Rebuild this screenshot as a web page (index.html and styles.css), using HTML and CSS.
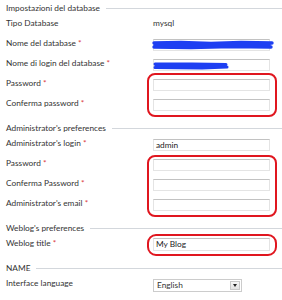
FILE: index.html
```html
<!DOCTYPE html>
<html>
<head>
<meta charset="utf-8">
<link rel="stylesheet" href="styles.css">
</head>
<body>
<div class="page">
  <section class="group">
    <div class="legend"><span>Impostazioni del database</span></div>
    <div class="row"><div class="label">Tipo Database</div><div class="field"><span class="value">mysql</span></div></div>
    <div class="row"><div class="label">Nome del database <span class="req">*</span></div><div class="field"><div class="input"></div>
      <svg class="scribble s1" width="124" height="12" viewBox="0 0 124 12"><path d="M3 4 L30 3.5 L60 4.5 L90 3.5 L121 4 M3 8 L40 8.5 L80 7.5 L120 8 M4 6 L118 6" stroke="#1e3ff2" stroke-width="3.4" stroke-linecap="round" fill="none"/></svg></div></div>
    <div class="row"><div class="label">Nome di login del database <span class="req">*</span></div><div class="field"><div class="input"></div>
      <svg class="scribble s2" width="80" height="10" viewBox="0 0 80 10"><path d="M3 3 L40 3 L74 3.5 M3 6.5 L50 7 L75 6 M4 4.8 L72 5" stroke="#1e3ff2" stroke-width="3" stroke-linecap="round" fill="none"/></svg></div></div>
    <div class="mark mark-a">
      <div class="row"><div class="label">Password <span class="req">*</span></div><div class="field"><div class="input"></div></div></div>
      <div class="row"><div class="label">Conferma password <span class="req">*</span></div><div class="field"><div class="input"></div></div></div>
    </div>
  </section>

  <section class="group">
    <div class="legend"><span>Administrator's preferences</span></div>
    <div class="row"><div class="label">Administrator's login <span class="req">*</span></div><div class="field"><div class="input">admin</div></div></div>
    <div class="mark mark-b">
      <div class="row"><div class="label">Password <span class="req">*</span></div><div class="field"><div class="input"></div></div></div>
      <div class="row"><div class="label">Conferma Password <span class="req">*</span></div><div class="field"><div class="input"></div></div></div>
      <div class="row"><div class="label">Administrator's email <span class="req">*</span></div><div class="field"><div class="input"></div></div></div>
    </div>
  </section>

  <section class="group">
    <div class="legend"><span>Weblog's preferences</span></div>
    <div class="mark mark-c">
      <div class="row"><div class="label">Weblog title <span class="req">*</span></div><div class="field"><div class="input tall">My Blog</div></div></div>
    </div>
  </section>

  <section class="group">
    <div class="legend"><span>NAME</span></div>
    <div class="row"><div class="label">Interface language</div><div class="field"><div class="select"><span class="sel-text">English</span><span class="sel-btn"><span class="tri"></span></span></div></div></div>
  </section>
</div>
</body>
</html>
```

FILE: styles.css
```css
html, body {
  margin: 0;
  padding: 0;
  background: #ffffff;
}
body {
  font-family: Lato, "Liberation Sans", sans-serif;
  font-size: 8.3px;
  color: #333333;
}
.page {
  width: 276px;
  padding: 3px 0 0 6px;
}
.group + .group {
  margin-top: 10px;
}
.legend {
  height: 10px;
  display: flex;
  align-items: center;
}
.legend::after {
  content: "";
  flex: 1;
  height: 1px;
  background: #d3d7dc;
  margin-left: 6px;
}
.row {
  display: flex;
  height: 20px;
}
.label {
  width: 141px;
  line-height: 20px;
  white-space: nowrap;
}
.req {
  color: #dc3b43;
}
.field {
  position: relative;
  width: 130px;
  box-sizing: border-box;
  padding: 6px 0 0 6px;
}
.value {
  display: block;
  margin-top: -6px;
  line-height: 20px;
}
.input {
  width: 117px;
  height: 12px;
  box-sizing: border-box;
  border: 1px solid #e4e4e4;
  border-top-color: #c2c2c2;
  background: #fff;
  font-size: 8.3px;
  line-height: 10px;
  padding-left: 2px;
  color: #222;
}
.input.tall {
  height: 13px;
  margin-top: -1px;
  line-height: 11px;
}
.scribble {
  position: absolute;
  left: 4px;
  top: 6px;
}
.scribble.s2 {
  left: 5px;
  top: 8px;
}
.mark {
  position: relative;
}
.mark::after {
  content: "";
  position: absolute;
  left: 141px;
  width: 130px;
  box-sizing: border-box;
  border: 2px solid #e0161f;
  border-radius: 8px;
}
.mark-a::after {
  top: 0;
  height: 44px;
}
.mark-b::after {
  top: 2px;
  height: 62px;
}
.mark-c::after {
  top: 1px;
  height: 22px;
  border-radius: 9px;
}
.select {
  width: 89px;
  height: 13px;
  box-sizing: border-box;
  border: 1px solid #cccccc;
  display: flex;
  align-items: center;
  justify-content: space-between;
  background: #fff;
}
.sel-text {
  padding-left: 3px;
  line-height: 11px;
}
.sel-btn {
  width: 10px;
  height: 9px;
  margin-right: 1px;
  box-sizing: border-box;
  border: 1px solid #c9c9c9;
  background: linear-gradient(#f7f7f7, #e2e2e2);
  display: flex;
  align-items: center;
  justify-content: center;
}
.tri {
  width: 0;
  height: 0;
  border-left: 2.5px solid transparent;
  border-right: 2.5px solid transparent;
  border-top: 3px solid #222;
}
```
